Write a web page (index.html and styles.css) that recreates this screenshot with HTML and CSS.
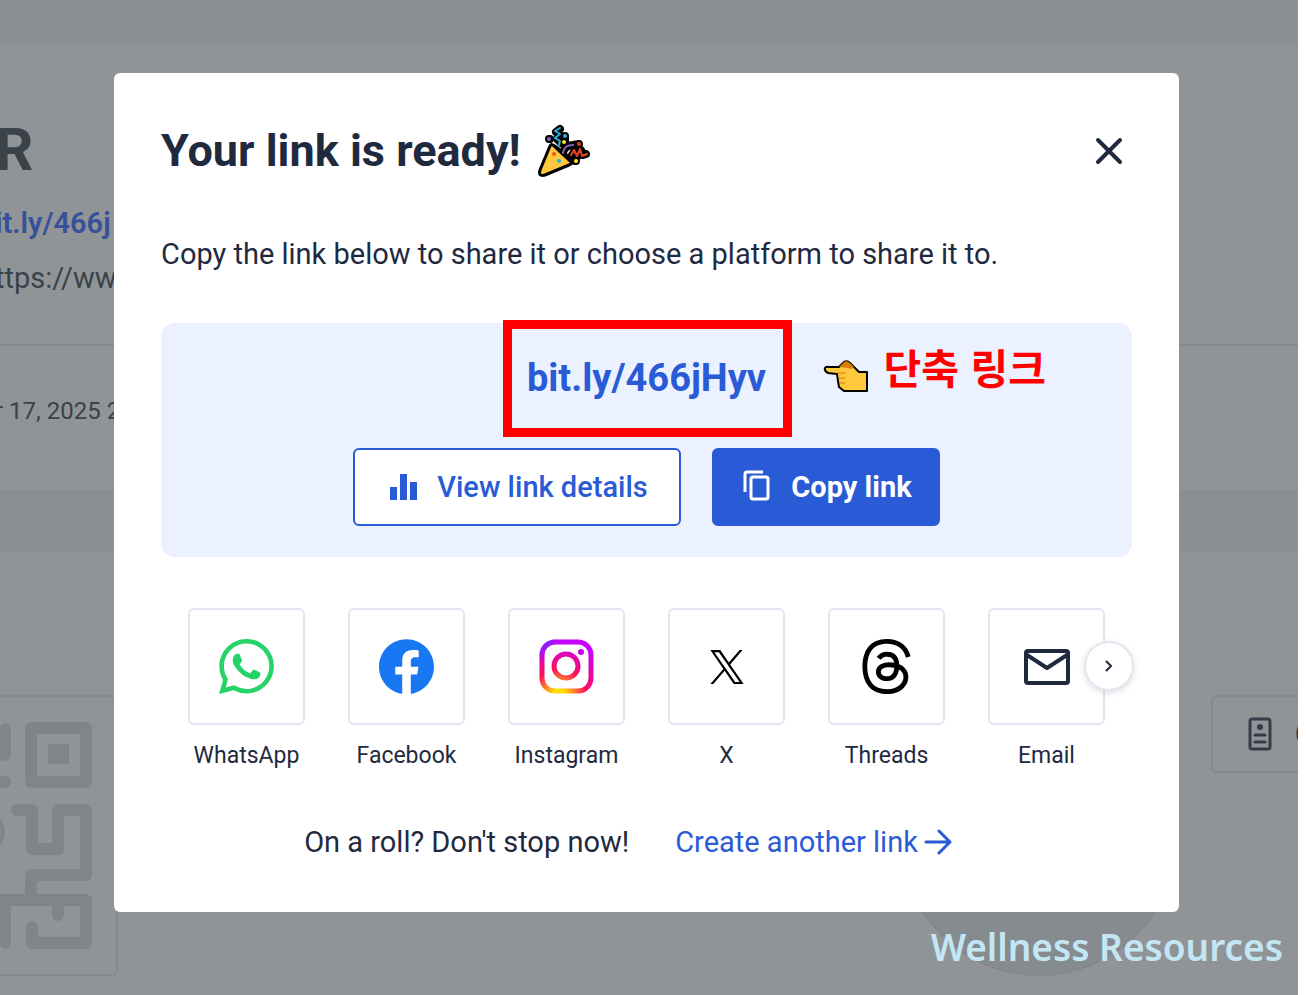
FILE: index.html
```html
<!DOCTYPE html>
<html lang="en">
<head>
    <meta charset="UTF-8">
    <meta name="viewport" content="width=device-width, initial-scale=1.0">
    <title>Your link is ready!</title>
    <link rel="stylesheet" href="styles.css">
</head>
<body>
    <div class="app">
        <!-- Link details page behind the dialog -->
        <div class="page">
            <section class="panel summary">
                <div class="summary-main">
                    <div class="page-title">R</div>
                    <a class="short-url" href="#">it.ly/466j</a>
                    <div class="long-url">ttps://ww</div>
                </div>
                <div class="summary-date">r 17, 2025 2</div>
            </section>
            <section class="panel codes">
                <div class="qr-card">
                    <svg class="qr" viewBox="0 0 118 280" fill="none" stroke="currentColor" stroke-width="12" stroke-linecap="round" stroke-linejoin="round">
                        <rect x="31" y="31" width="55" height="54"/>
                        <rect x="48" y="47" width="21" height="20" fill="currentColor" stroke="none"/>
                        <path d="M5 32v26M-6 85H5M17 113h15v39h26v-39h28v65H31v25M-6 203H86v43H32v-16M5 203v43M58 203v15"/>
                        <circle cx="-15" cy="135" r="20" fill="currentColor" stroke="none"/>
                    </svg>
                </div>
                <div class="page-circle"></div>
                <button class="customize" type="button">
                    <svg width="24" height="34" viewBox="0 0 24 34" fill="none" stroke="currentColor" stroke-width="3">
                        <rect x="2" y="2" width="20" height="30" rx="2"/>
                        <circle cx="12" cy="10" r="3" fill="currentColor" stroke="none"/>
                        <path d="M7 18h10M7 25h10" stroke-linecap="round"/>
                    </svg>
                    <span>C</span>
                </button>
            </section>
        </div>

        <div class="overlay">
            <div class="modal" role="dialog" aria-labelledby="modalTitle">
                <div class="modal-header">
                    <h1 id="modalTitle">Your link is ready!</h1>
                    <svg class="party" viewBox="0 0 54 54" fill="none" stroke-linecap="round" stroke-linejoin="round">
                        <g stroke="#000" stroke-width="8">
                            <path d="M23 5l-4 3 4 3-3 4 4 4M12 15h1M28 12v6M26 28c2-5 5-7 10-7l6-1M35 31l3-5 3 6 3-6 2 5 3-1M38 37h1"/>
                            <path d="M16 25L32 37" stroke-width="10"/>
                        </g>
                        <path d="M13 22Q14 19 17 22L33 37Q36 39 32 41L8 51Q1 53 3 46Z" fill="#ffc83d" stroke="#000" stroke-width="3"/>
                        <path d="M23 4l-5 3 5 3-5 4 5 3-1 4" stroke="#26b4e0" stroke-width="2"/>
                        <path d="M26 29c1-6 4-8 10-8" stroke="#8163ca" stroke-width="2"/>
                        <path d="M34 31l3-5 3 6 3-7 2 7 5-2" stroke="#e8421c" stroke-width="2"/>
                        <circle cx="12" cy="15" r="2" fill="#8163ca"/>
                        <circle cx="28" cy="12" r="2" fill="#26b4e0"/>
                        <circle cx="27" cy="18" r="2" fill="#ffe51f"/>
                        <circle cx="42" cy="20" r="2" fill="#f03a17"/>
                        <circle cx="39" cy="37" r="2" fill="#ffe51f"/>
                        <circle cx="17" cy="30" r="2" fill="#f8511d"/>
                        <circle cx="22" cy="37" r="2" fill="#26b4e0"/>
                    </svg>
                    <button class="close" type="button" aria-label="Close">
                        <svg width="28" height="28" viewBox="0 0 28 28" fill="none" stroke="currentColor" stroke-width="4" stroke-linecap="round">
                            <path d="M3 3l22 22M25 3L3 25"/>
                        </svg>
                    </button>
                </div>

                <p class="intro">Copy the link below to share it or choose a platform to share it to.</p>

                <div class="link-box">
                    <div class="link-row">
                        <a class="link" href="#">bit.ly/466jHyv</a>
                        <div class="highlight"></div>
                        <div class="note">
                            <svg class="hand" width="46" height="34" viewBox="-1 -1 46 34" stroke-linejoin="round" stroke-linecap="round">
                                <path d="M15 7L20 2Q23 0 26 3L35 12H43V31H20L15 27L14 21L13 14L4 13Q0 11 1 8Q2 6 5 7Z" fill="#ffc83d" stroke="#000" stroke-width="2"/>
                                <path d="M15 7L20 2Q23 0 26 3L30 7Q28 10 24 8Z" fill="#d67d00"/>
                                <path d="M14 13h7M15 18h6M16 23h5" fill="none" stroke="#d67d00"/>
                            </svg>
                            <span lang="ko">단축 링크</span>
                        </div>
                    </div>
                    <div class="actions">
                        <button class="btn btn-outline" type="button">
                            <svg width="36" height="36" viewBox="0 0 36 36" fill="currentColor">
                                <path d="M4 18h7v13H4zM14 5h7v26h-7zM24 13h7v18h-7z"/>
                            </svg>
                            View link details
                        </button>
                        <button class="btn btn-primary" type="button">
                            <svg width="36" height="36" viewBox="0 0 36 36" fill="none" stroke="currentColor" stroke-width="3">
                                <rect x="11" y="8" width="17" height="22" rx="2"/>
                                <path d="M5 23V5q0-2 2-2h16"/>
                            </svg>
                            Copy link
                        </button>
                    </div>
                </div>

                <div class="share">
                    <a class="share-item" href="#">
                        <span class="tile">
                            <svg width="55" height="55" viewBox="0 0 24 24" fill="#25d366"><path d="M17.472 14.382c-.297-.149-1.758-.867-2.03-.967-.273-.099-.471-.148-.67.15-.197.297-.767.966-.94 1.164-.173.199-.347.223-.644.075-.297-.15-1.255-.463-2.39-1.475-.883-.788-1.48-1.761-1.653-2.059-.173-.297-.018-.458.13-.606.134-.133.298-.347.446-.52.149-.174.198-.298.298-.497.099-.198.05-.371-.025-.52-.075-.149-.669-1.612-.916-2.207-.242-.579-.487-.5-.669-.51-.173-.008-.371-.01-.57-.01-.198 0-.52.074-.792.372-.272.297-1.04 1.016-1.04 2.479 0 1.462 1.065 2.875 1.213 3.074.149.198 2.096 3.2 5.077 4.487.709.306 1.262.489 1.694.625.712.227 1.36.195 1.871.118.571-.085 1.758-.719 2.006-1.413.248-.694.248-1.289.173-1.413-.074-.124-.272-.198-.57-.347m-5.421 7.403h-.004a9.87 9.87 0 01-5.031-1.378l-.361-.214-3.741.982.998-3.648-.235-.374a9.86 9.86 0 01-1.51-5.26c.001-5.45 4.436-9.884 9.888-9.884 2.64 0 5.122 1.03 6.988 2.898a9.825 9.825 0 012.893 6.994c-.003 5.45-4.437 9.884-9.885 9.884m8.413-18.297A11.815 11.815 0 0012.05 0C5.495 0 .16 5.335.157 11.892c0 2.096.547 4.142 1.588 5.945L.057 24l6.305-1.654a11.882 11.882 0 005.683 1.448h.005c6.554 0 11.89-5.335 11.893-11.893a11.821 11.821 0 00-3.48-8.413z"/></svg>
                        </span>
                        WhatsApp
                    </a>
                    <a class="share-item" href="#">
                        <span class="tile">
                            <svg width="55" height="55" viewBox="0 0 24 24" fill="#1877f2"><path d="M24 12.073c0-6.627-5.373-12-12-12s-12 5.373-12 12c0 5.99 4.388 10.954 10.125 11.854v-8.385H7.078v-3.47h3.047V9.43c0-3.007 1.792-4.669 4.533-4.669 1.312 0 2.686.235 2.686.235v2.953H15.83c-1.491 0-1.956.925-1.956 1.874v2.25h3.328l-.532 3.47h-2.796v8.385C19.612 23.027 24 18.062 24 12.073z"/></svg>
                        </span>
                        Facebook
                    </a>
                    <a class="share-item" href="#">
                        <span class="tile">
                            <svg width="55" height="55" viewBox="0 0 55 55">
                                <defs>
                                    <radialGradient id="igWarm" gradientUnits="userSpaceOnUse" cx="20" cy="57" r="54">
                                        <stop offset="0" stop-color="#fd0"/>
                                        <stop offset=".12" stop-color="#fd0"/>
                                        <stop offset=".5" stop-color="#ff0f5a"/>
                                        <stop offset="1" stop-color="#c800ff"/>
                                    </radialGradient>
                                    <radialGradient id="igCool" gradientUnits="userSpaceOnUse" cx="2" cy="2" r="22">
                                        <stop offset="0" stop-color="#5a3cff"/>
                                        <stop offset="1" stop-color="#a010ff" stop-opacity="0"/>
                                    </radialGradient>
                                </defs>
                                <g fill="none" stroke="url(#igWarm)" stroke-width="5">
                                    <rect x="3" y="3" width="49" height="49" rx="13"/>
                                    <circle cx="27" cy="27" r="12"/>
                                </g>
                                <circle cx="42" cy="13" r="3" fill="#c800e6"/>
                                <rect x="3" y="3" width="49" height="49" rx="13" fill="none" stroke="url(#igCool)" stroke-width="5"/>
                            </svg>
                        </span>
                        Instagram
                    </a>
                    <a class="share-item" href="#">
                        <span class="tile">
                            <svg width="34" height="34" viewBox="0 0 24 24"><path d="M14.234 10.162 22.977 0h-2.072l-7.591 8.824L7.251 0H.258l9.168 13.343L.258 24H2.33l8.016-9.318L16.749 24h6.993zm-2.837 3.299-.929-1.329L3.076 1.56h3.182l5.965 8.532.929 1.329 7.754 11.09h-3.182z"/></svg>
                        </span>
                        X
                    </a>
                    <a class="share-item" href="#">
                        <span class="tile">
                            <svg width="55" height="55" viewBox="0 0 24 24"><path d="M12.186 24h-.007c-3.581-.024-6.334-1.205-8.184-3.509C2.35 18.44 1.5 15.586 1.472 12.01v-.017c.03-3.579.879-6.43 2.525-8.482C5.845 1.205 8.6.024 12.18 0h.014c2.746.02 5.043.725 6.826 2.098 1.677 1.29 2.858 3.13 3.509 5.467l-2.04.569c-1.104-3.96-3.898-5.984-8.304-6.015-2.91.022-5.11.936-6.54 2.717C4.307 6.504 3.616 8.914 3.589 12c.027 3.086.718 5.496 2.057 7.164 1.43 1.783 3.631 2.698 6.54 2.717 2.623-.02 4.358-.631 5.8-2.045 1.647-1.613 1.618-3.593 1.09-4.798-.31-.71-.873-1.3-1.634-1.75-.192 1.352-.622 2.446-1.284 3.272-.886 1.102-2.14 1.704-3.73 1.79-1.202.065-2.361-.218-3.259-.801-1.063-.689-1.685-1.74-1.752-2.964-.065-1.19.408-2.285 1.33-3.082.88-.76 2.119-1.207 3.583-1.291a13.853 13.853 0 0 1 3.02.142c-.126-.742-.375-1.332-.75-1.757-.513-.586-1.308-.883-2.359-.89h-.029c-.844 0-1.992.232-2.721 1.32L7.734 7.847c.98-1.454 2.568-2.256 4.478-2.256h.044c3.194.02 5.097 1.975 5.287 5.388.108.046.216.094.321.142 1.49.7 2.58 1.761 3.154 3.07.797 1.82.871 4.79-1.548 7.158-1.85 1.81-4.094 2.628-7.277 2.65Zm1.003-11.69c-.242 0-.487.007-.739.021-1.836.103-2.98.946-2.916 2.143.067 1.256 1.452 1.839 2.784 1.767 1.224-.065 2.818-.543 3.086-3.71a10.5 10.5 0 0 0-2.215-.221z"/></svg>
                        </span>
                        Threads
                    </a>
                    <a class="share-item" href="#">
                        <span class="tile">
                            <svg width="46" height="38" viewBox="0 0 46 38" fill="none" stroke="#1f2a3f" stroke-width="4" stroke-linejoin="round">
                                <rect x="2" y="3" width="42" height="32" rx="2"/>
                                <path d="M3 7l20 13L43 7"/>
                            </svg>
                        </span>
                        Email
                    </a>
                    <button class="next" type="button" aria-label="More platforms">
                        <svg width="12" height="14" viewBox="0 0 12 14" fill="none" stroke="currentColor" stroke-width="2">
                            <path d="M3 2l5 5-5 5"/>
                        </svg>
                    </button>
                </div>

                <div class="modal-footer">
                    <span>On a roll? Don't stop now!</span>
                    <a class="create" href="#">
                        Create another link
                        <svg width="28" height="28" viewBox="0 0 28 28" fill="none" stroke="currentColor" stroke-width="3" stroke-linecap="round" stroke-linejoin="round">
                            <path d="M2 14h24M15 3l11 11-11 11"/>
                        </svg>
                    </a>
                </div>
            </div>
        </div>

        <div class="watermark">Wellness Resources</div>
    </div>
</body>
</html>
```
FILE: styles.css
```css
* {
    margin: 0;
    padding: 0;
    box-sizing: border-box;
}

body {
    min-height: 100vh;
    padding-right: 8px;
    background: #fff;
    color: #1f2a3f;
    font-family: Roboto, 'Liberation Sans', sans-serif;
    font-size: 29px;
    line-height: 40px;
}

a {
    text-decoration: none;
    color: inherit;
}

button {
    font: inherit;
    cursor: pointer;
}

svg {
    flex: none;
}

.app {
    position: relative;
    min-height: 100vh;
    overflow: hidden;
    background: #8b8e92;
}

/* dimmed page */
.page {
    display: flex;
    flex-direction: column;
    gap: 62px;
    min-height: 100vh;
    padding-top: 45px;
    color: #3a424a;
}

.panel {
    background: #909496;
}

.summary {
    margin-left: -5px;
}

.summary-main {
    display: flex;
    flex-direction: column;
    height: 301px;
    padding-top: 73px;
    border-bottom: 2px solid #868a8e;
}

.page-title {
    font-size: 60px;
    line-height: 64px;
    font-weight: 700;
}

.short-url {
    margin-top: 21px;
    color: #36509a;
    font-weight: 600;
}

.long-url {
    margin-top: 15px;
}

.summary-date {
    padding: 45px 0 59px;
    font-size: 24px;
}

.codes {
    position: relative;
    display: flex;
    justify-content: space-between;
    align-items: flex-start;
    flex: 1;
    padding-top: 143px;
}

.qr-card {
    width: 118px;
    height: 281px;
    border: 2px solid #868a90;
    border-left: 0;
    border-radius: 0 6px 6px 0;
    color: #808587;
}

.qr {
    display: block;
    width: 118px;
}

.page-circle {
    position: absolute;
    right: 121px;
    top: 148px;
    width: 276px;
    height: 276px;
    border: 1px dashed #7a7f88;
    border-radius: 50%;
    background: #868b8f;
}

.customize {
    display: flex;
    align-items: center;
    gap: 23px;
    width: 87px;
    height: 78px;
    padding-left: 35px;
    overflow: hidden;
    border: 2px solid #868a8e;
    border-right: 0;
    border-radius: 6px 0 0 6px;
    background: none;
    color: #333d48;
    font-weight: 600;
}

/* dialog */
.overlay {
    position: absolute;
    inset: 0;
    padding: 73px 119px 83px 114px;
}

.modal {
    padding: 47px 47px 50px;
    border-radius: 6px;
    background: #fff;
}

.modal-header {
    display: flex;
    align-items: center;
    height: 62px;
}

.modal-header h1 {
    font-size: 45px;
    line-height: 62px;
    font-weight: 700;
}

.party {
    width: 54px;
    height: 54px;
    margin-left: 16px;
}

.close {
    display: flex;
    margin-left: auto;
    margin-right: 9px;
    border: 0;
    background: none;
    color: #1f2a3f;
}

.intro {
    margin-top: 52px;
}

.link-box {
    margin-top: 49px;
    padding: 35px 24px 31px;
    border-radius: 14px;
    background: #ebf1ff;
}

.link-row {
    position: relative;
    display: flex;
    justify-content: center;
}

.link {
    color: #2a5bd7;
    font-size: 38px;
    font-weight: 700;
}

.highlight {
    position: absolute;
    top: -38px;
    left: calc(50% - 144px);
    width: 289px;
    height: 117px;
    border: 9px solid #f00;
    pointer-events: none;
}

.note {
    position: absolute;
    top: -12px;
    left: calc(50% + 176px);
    display: flex;
    align-items: flex-start;
    gap: 15px;
    color: #f00;
    font-family: 'Noto Sans CJK KR', sans-serif;
    font-size: 41px;
    font-weight: 700;
    white-space: nowrap;
}

.hand {
    margin-top: 13px;
}

.actions {
    display: flex;
    justify-content: center;
    gap: 31px;
    margin-top: 50px;
}

.btn {
    display: flex;
    align-items: center;
    justify-content: center;
    gap: 15px;
    height: 78px;
    border: 2px solid #2a5bd7;
    border-radius: 6px;
    white-space: nowrap;
}

.btn-outline {
    width: 328px;
    background: #fff;
    color: #2a5bd7;
    font-weight: 500;
}

.btn-primary {
    width: 228px;
    background: #2a5bd7;
    color: #fff;
    font-weight: 700;
}

.share {
    position: relative;
    display: flex;
    justify-content: space-between;
    margin-top: 51px;
    padding: 0 27px;
}

.share-item {
    display: flex;
    flex-direction: column;
    align-items: center;
    gap: 16px;
    width: 117px;
    font-size: 23px;
    line-height: 30px;
}

.tile {
    display: flex;
    align-items: center;
    justify-content: center;
    width: 117px;
    height: 117px;
    border: 2px solid #e1e6f0;
    border-radius: 6px;
}

.next {
    position: absolute;
    top: 33px;
    right: -2px;
    display: flex;
    align-items: center;
    justify-content: center;
    width: 50px;
    height: 50px;
    border: 2px solid #e1e6f0;
    border-radius: 50%;
    background: #fff;
    box-shadow: 0 2px 6px rgba(31, 42, 63, 0.15);
    color: #1f2a3f;
}

.modal-footer {
    display: flex;
    justify-content: center;
    gap: 46px;
    margin-top: 51px;
    padding-right: 37px;
}

.create {
    display: flex;
    align-items: center;
    gap: 6px;
    color: #2a5bd7;
}

.watermark {
    position: absolute;
    right: 15px;
    bottom: 23px;
    color: #c3e6f5;
    font-family: 'Noto Sans', sans-serif;
    font-size: 37px;
    line-height: 50px;
    font-weight: 600;
}
```
